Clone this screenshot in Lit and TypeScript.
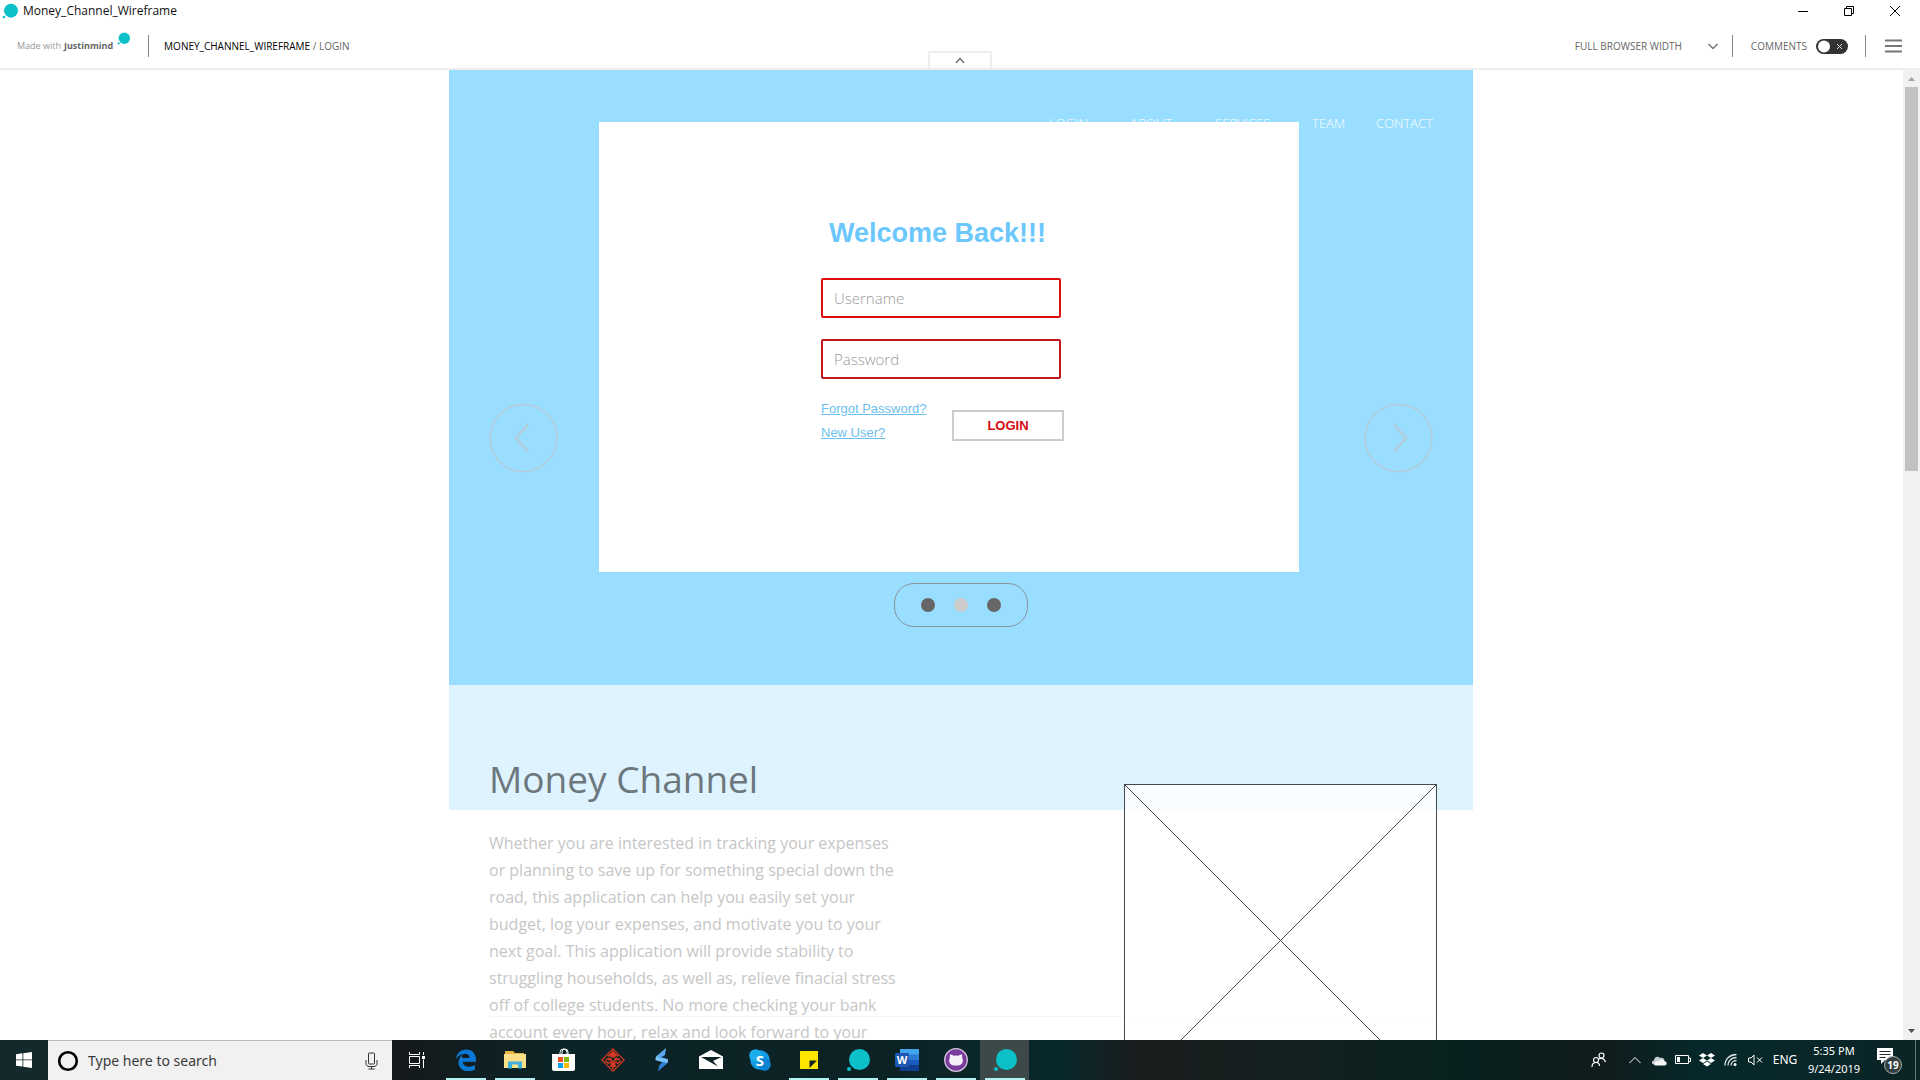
import { LitElement, html, css } from "lit";
import { customElement } from "lit/decorators.js";

const bubble = (size: number) => html`
  <svg width=${size} height=${size} viewBox="0 0 24 24" aria-hidden="true">
    <circle cx="13.5" cy="11.5" r="10.5" fill="#0bc0c6" />
    <circle cx="3" cy="21" r="2" fill="#0bc0c6" />
  </svg>
`;

@customElement("prototype-toolbar")
class PrototypeToolbar extends LitElement {
  static styles = css`
    :host {
      display: flex;
      flex-direction: column;
      position: relative;
      background: #fff;
      border-bottom: 2px solid #eee;
      font-family: "Open Sans", "Noto Sans", sans-serif;
    }
    button {
      border: 0;
      padding: 0;
      background: none;
      font: inherit;
      color: inherit;
      display: flex;
      align-items: center;
      justify-content: center;
    }
    .titlebar {
      display: flex;
      align-items: center;
      height: 22px;
      padding-left: 2px;
      gap: 5px;
      font-size: 12px;
      line-height: 22px;
      color: #111;
    }
    .titlebar svg {
      display: block;
    }
    .controls {
      display: flex;
      margin-left: auto;
      padding-right: 2px;
    }
    .controls button {
      width: 46px;
      height: 22px;
    }
    .toolbar {
      display: flex;
      align-items: center;
      box-sizing: border-box;
      height: 46px;
      padding: 2px 18px 0 17px;
      font-size: 10px;
      line-height: 16px;
      color: #666;
    }
    .brand {
      display: flex;
      align-items: center;
      color: #999;
      font-size: 9px;
    }
    .brand b {
      margin-left: 3px;
      font-weight: 700;
      color: #666;
    }
    .brand svg {
      margin: 0 0 16px 4px;
    }
    .divider {
      width: 1px;
      height: 22px;
      background: #888;
    }
    .crumbs {
      margin-left: 15px;
    }
    .crumbs a {
      color: #000;
      text-decoration: none;
    }
    .brand + .divider {
      margin-left: 18px;
    }
    .tools {
      display: flex;
      align-items: center;
      margin-left: auto;
    }
    .width {
      display: flex;
      align-items: center;
      margin-right: 14px;
    }
    select {
      appearance: none;
      border: 0;
      padding: 0;
      width: 133px;
      background: none;
      font: inherit;
      color: inherit;
    }
    .comments {
      display: flex;
      align-items: center;
      gap: 9px;
      margin: 0 17px 0 18px;
    }
    .switch {
      display: flex;
      position: relative;
    }
    .switch input {
      appearance: none;
      margin: 0;
      width: 32px;
      height: 15px;
      border-radius: 8px;
      background: #333;
    }
    .switch svg {
      position: absolute;
      inset: 0;
      pointer-events: none;
    }
    .menu {
      margin-left: 19px;
    }
    .collapse {
      position: absolute;
      left: 50%;
      bottom: 0;
      margin-left: -32px;
      box-sizing: border-box;
      width: 64px;
      height: 17px;
      border: 2px solid #eee;
      border-bottom: 0;
    }
  `;

  render() {
    return html`
      <div class="titlebar">
        ${bubble(16)}
        <span>Money_Channel_Wireframe</span>
        <div class="controls">
          <button aria-label="Minimize">
            <svg width="12" height="12"><path d="M1 6.500h10" stroke="#000" /></svg>
          </button>
          <button aria-label="Restore">
            <svg width="12" height="12" fill="none" stroke="#000">
              <path d="M1.500 3.500h7v7h-7zM3.500 3.500v-2h7v7h-2" />
            </svg>
          </button>
          <button aria-label="Close">
            <svg width="12" height="12"><path d="M1 1l10 10M11 1L1 11" stroke="#000" /></svg>
          </button>
        </div>
      </div>
      <div class="toolbar">
        <div class="brand">Made with <b>Justinmind</b>${bubble(13)}</div>
        <span class="divider"></span>
        <div class="crumbs"><a href="#">MONEY_CHANNEL_WIREFRAME</a> / LOGIN</div>
        <div class="tools">
          <div class="width">
            <select aria-label="Simulation width">
              <option>FULL BROWSER WIDTH</option>
            </select>
            <svg width="10" height="7" fill="none" stroke="#777" stroke-width="1.500">
              <path d="M.5 1l4.500 4.500L9.500 1" />
            </svg>
          </div>
          <span class="divider"></span>
          <label class="comments">
            COMMENTS
            <span class="switch">
              <input type="checkbox" role="switch" />
              <svg width="32" height="15">
                <circle cx="8" cy="7.500" r="6" fill="#fff" />
                <path d="M21 5l5 5M26 5l-5 5" stroke="#ddd" />
              </svg>
            </span>
          </label>
          <span class="divider"></span>
          <button class="menu" aria-label="Menu">
            <svg width="17" height="14" stroke="#777" stroke-width="2">
              <path d="M0 1.500h17M0 7h17M0 12.500h17" />
            </svg>
          </button>
        </div>
      </div>
      <button class="collapse" aria-label="Hide toolbar">
        <svg width="10" height="7" fill="none" stroke="#777" stroke-width="1.500">
          <path d="M1 6l4-4.500L9 6" />
        </svg>
      </button>
    `;
  }
}

@customElement("login-dialog")
class LoginDialog extends LitElement {
  static styles = css`
    :host {
      display: flex;
      justify-content: center;
      background: #fff;
      font-family: "Liberation Sans", Arial, sans-serif;
    }
    form {
      width: 256px;
      padding-top: 93px;
      padding-right: 13px;
      box-sizing: border-box;
      display: flex;
      flex-direction: column;
    }
    h1 {
      margin: 0 0 27px 8px;
      font-size: 27px;
      line-height: 36px;
      font-weight: 700;
      color: #6cc8fc;
      white-space: nowrap;
    }
    .fields {
      display: flex;
      flex-direction: column;
      gap: 21px;
      margin-bottom: 18px;
    }
    input {
      box-sizing: border-box;
      width: 240px;
      height: 40px;
      padding: 0 11px;
      border: 2px solid #dc1010;
      border-radius: 2px;
      background: #fff;
      font: 300 15px/24px "Open Sans", sans-serif;
      color: #555;
    }
    input[type="password"] {
      border-color: #c4161c;
    }
    input::placeholder {
      color: #999;
      opacity: 1;
    }
    .actions {
      display: flex;
      align-items: flex-start;
      justify-content: space-between;
    }
    .links {
      display: flex;
      flex-direction: column;
      font-size: 13px;
      line-height: 24px;
    }
    a {
      color: #6cc0f0;
    }
    button {
      box-sizing: border-box;
      width: 112px;
      height: 31px;
      margin-top: 13px;
      border: 2px solid #ccc;
      background: #fff;
      padding: 0;
      font: 700 13px/20px "Liberation Sans", Arial, sans-serif;
      color: #d6090f;
    }
  `;

  render() {
    return html`
      <form>
        <h1>Welcome Back!!!</h1>
        <div class="fields">
          <input type="text" placeholder="Username" aria-label="Username" />
          <input type="password" placeholder="Password" aria-label="Password" />
        </div>
        <div class="actions">
          <div class="links">
            <a href="#">Forgot Password?</a>
            <a href="#">New User?</a>
          </div>
          <button type="button">LOGIN</button>
        </div>
      </form>
    `;
  }
}

@customElement("landing-page")
class LandingPage extends LitElement {
  static styles = css`
    :host {
      display: block;
      position: relative;
      width: 1024px;
      max-width: 100%;
      font-family: "Open Sans", "Noto Sans", sans-serif;
    }
    .hero {
      display: flex;
      flex-direction: column;
      background: #99ddff;
      padding: 44px 40px 58px;
    }
    nav {
      display: grid;
      grid-template-columns: 81px 85px 97px 64px auto;
      justify-content: end;
      font-size: 13px;
      line-height: 18px;
      font-weight: 300;
    }
    nav a {
      color: #fff;
      text-decoration: none;
    }
    .carousel {
      display: flex;
      justify-content: space-between;
      margin-top: 271px;
    }
    .carousel button {
      border: 0;
      padding: 0;
      background: none;
      display: flex;
    }
    .pager {
      display: flex;
      align-items: center;
      align-self: center;
      gap: 19px;
      box-sizing: border-box;
      height: 44px;
      margin-top: 110px;
      padding: 0 26px;
      border: 1px solid #8a949a;
      border-radius: 20px;
    }
    .dot {
      width: 14px;
      height: 14px;
      padding: 0;
      border: 0;
      border-radius: 50%;
      background: #666;
    }
    .current {
      background: #ccc;
    }
    login-dialog {
      position: absolute;
      left: 150px;
      top: 52px;
      width: 700px;
      height: 450px;
    }
    .about {
      display: flex;
      justify-content: space-between;
      padding: 0 36px 0 40px;
      background: linear-gradient(#dff3ff 125px, transparent 125px);
    }
    .copy {
      width: 412px;
      padding-top: 68px;
    }
    h2 {
      margin: 0 0 25px;
      font-size: 37px;
      line-height: 52px;
      font-weight: 400;
      color: #6c777d;
      white-space: nowrap;
    }
    p {
      margin: 0;
      font-size: 16px;
      line-height: 27px;
      color: #c6c6c6;
    }
    .picture {
      position: relative;
      z-index: 1;
      margin-top: 99px;
      flex: none;
    }
    .rule {
      position: absolute;
      left: 40px;
      right: 36px;
      top: 946px;
      margin: 0;
      border: 0;
      border-top: 1px solid #f6f6f6;
    }
  `;

  render() {
    return html`
      <section class="hero">
        <nav>
          ${["LOGIN", "ABOUT", "SERVICES", "TEAM", "CONTACT"].map(
            (name) => html`<a href="#">${name}</a>`
          )}
        </nav>
        <div class="carousel">
          <button aria-label="Previous">
            <svg width="70" height="70" fill="none" stroke="#b4ccd9">
              <circle cx="34.500" cy="35" r="33.500" stroke-width="1.500" />
              <path d="M39 21.500L27 35l12 13.500" stroke-width="2.500" />
            </svg>
          </button>
          <button aria-label="Next">
            <svg width="70" height="70" fill="none" stroke="#b4ccd9">
              <circle cx="35.500" cy="35" r="33.500" stroke-width="1.500" />
              <path d="M31 21.500L43 35 31 48.500" stroke-width="2.500" />
            </svg>
          </button>
        </div>
        <div class="pager">
          <button class="dot" aria-label="Slide 1"></button>
          <button class="dot current" aria-label="Slide 2"></button>
          <button class="dot" aria-label="Slide 3"></button>
        </div>
      </section>
      <section class="about">
        <div class="copy">
          <h2>Money Channel</h2>
          <p>
            Whether you are interested in tracking your expenses or planning to save up for
            something special down the road, this application can help you easily set your budget,
            log your expenses, and motivate you to your next goal. This application will provide
            stability to struggling households, as well as, relieve finacial stress off of college
            students. No more checking your bank account every hour, relax and look forward to your
          </p>
        </div>
        <svg class="picture" width="313" height="313" stroke="#434a50">
          <rect x=".5" y=".5" width="312" height="312" fill="#fff" fill-opacity=".8" />
          <path d="M.5.5l312 312M312.500.5L.5 312.500" />
        </svg>
      </section>
      <hr class="rule" />
      <login-dialog></login-dialog>
    `;
  }
}

interface Task {
  name: string;
  open?: boolean;
  active?: boolean;
  icon: unknown;
}

const tasks: Task[] = [
  {
    name: "Task View",
    icon: html`<svg width="18" height="18" fill="none" stroke="#fff">
      <path d="M1.500 5.500h10v7h-10zM1.500 1v2.500h10V1M1.500 17v-2.500h10V17M15.500 1v3M15.500 8.500V17" />
      <path d="M14 5h3v3h-3z" fill="#fff" stroke="none" />
    </svg>`,
  },
  {
    name: "Edge",
    open: true,
    icon: html`<svg width="22" height="22" viewBox="0 0 22 22">
      <path
        d="M1 10C1.500 4.500 5.800.5 11.300.5 17.500.5 21 5 21 10.500v2.300H7.800c.2 3.500 3 5 6.200 5 2.300 0 4.300-.7 6-1.700v4.300c-2 1.100-4.400 1.600-7 1.600-6 0-9.500-3.700-9.500-8.600 0-3.600 2-6.400 5-7.900C7 6.600 7 8 7 9h7.500c0-2.700-1.500-4.300-4.500-4.300C6 4.700 3 7 1 10z"
        fill="#0a78d4"
      />
    </svg>`,
  },
  {
    name: "File Explorer",
    open: true,
    icon: html`<svg width="22" height="20" viewBox="0 0 22 20">
      <path d="M1 1h8l2 2h9v3H1z" fill="#e8b93e" />
      <path d="M0 4h22v14H0z" fill="#fbe08a" />
      <path d="M4 18.500v-7h14v7h-4v-4H8v4z" fill="#3fb1dc" />
    </svg>`,
  },
  {
    name: "Store",
    icon: html`<svg width="24" height="24" viewBox="0 0 24 24">
      <path d="M8 7V4.500a3.500 3.500 0 017 0V7M10 7V4a3 3 0 016 0v3" fill="none" stroke="#fff" />
      <path d="M0 6h23v15a2 2 0 01-2 2H2a2 2 0 01-2-2z" fill="#fff" />
      <path d="M6 9h5v5H6z" fill="#f25022" />
      <path d="M12 9h5v5h-5z" fill="#7fba00" />
      <path d="M6 15h5v5H6z" fill="#00a4ef" />
      <path d="M12 15h5v5h-5z" fill="#ffb900" />
    </svg>`,
  },
  {
    name: "Game",
    icon: html`<svg width="24" height="24" viewBox="0 0 24 24" fill="none" stroke="#d43a22">
      <path d="M12 .8L23.200 12 12 23.200.8 12z" stroke-width="1.200" />
      <path
        d="M12 2.500v3M7 8l4-2.500h2L17 8M5 11l5 1 2 2 2-2 5-1M7.500 10l3 1M16.500 10l-3 1M8 14l2.500 1v4M16 14l-2.500 1v4M12 15v6M4 12.500l4 3.500M20 12.500L16 16M9 18h6"
        stroke-width="1.600"
      />
      <path d="M9 6l3-2.500L15 6l-1 3h-4z" fill="#d43a22" />
    </svg>`,
  },
  {
    name: "Streamlabs",
    icon: html`<svg width="16" height="24" viewBox="0 0 16 24">
      <path d="M12 0L2 8.500 1.500 12l8.500 3 1-4-4-1.500L11 7z" fill="#5aa9ee" />
      <path d="M4 23.500l9.500-8.500.5-4-8-2.500L5 12l4 2-3.500 3z" fill="#2f7fd8" />
      <path d="M2 8.500l12 3-.5 3.500L1.500 12z" fill="#7cc4f5" />
    </svg>`,
  },
  {
    name: "Mail",
    icon: html`<svg width="24" height="20" viewBox="0 0 24 20">
      <path d="M0 6.500L12 0l12 6.500V19H0z" fill="#fff" />
      <path d="M2 7h20.500L14 11l5 5.500L11 12z" fill="#0c2124" />
    </svg>`,
  },
  {
    name: "Skype",
    icon: html`<svg width="22" height="22" viewBox="0 0 22 22">
      <circle cx="11" cy="11" r="9.800" fill="#0f9be4" />
      <circle cx="6.500" cy="6.500" r="6.300" fill="#1cace9" />
      <circle cx="15.500" cy="15.500" r="6.300" fill="#0b82d2" />
      <text x="11" y="16.500" text-anchor="middle" class="glyph">S</text>
    </svg>`,
  },
  {
    name: "Sticky Notes",
    open: true,
    icon: html`<svg width="18" height="18">
      <path d="M0 0h18v18H0z" fill="#ffe600" />
      <path d="M9.500 9.500H17L9.500 17z" fill="#16211f" />
    </svg>`,
  },
  { name: "Justinmind", open: true, icon: bubble(24) },
  {
    name: "Word",
    open: true,
    icon: html`<svg width="24" height="22" viewBox="0 0 24 22">
      <path d="M5 0h19v6H5z" fill="#41a5ee" />
      <path d="M5 5.500h19V11H5z" fill="#2b7cd3" />
      <path d="M5 11h19v5.500H5z" fill="#185abd" />
      <path d="M5 16.500h19V22H5z" fill="#103f91" />
      <rect y="4" width="14" height="14" rx="1" fill="#1c57b5" />
      <text x="7" y="15" text-anchor="middle" class="letter">W</text>
    </svg>`,
  },
  {
    name: "GitHub Desktop",
    open: true,
    icon: html`<svg width="24" height="24" viewBox="0 0 24 24">
      <circle cx="12" cy="12" r="11.300" fill="#7a3c9c" stroke="#d9c8e2" stroke-width="1.300" />
      <path
        d="M6 6.500c1.500 0 2.700.6 3.700 1.300a12 12 0 014.600 0c1-.7 2.200-1.300 3.700-1.300.4 1.200.4 2.300 0 3.300 1.200 1.600 1.200 4 0 5.700-1.300 1.700-3.500 2-6 2s-4.700-.3-6-2c-1.200-1.700-1.200-4.100 0-5.700-.4-1-.4-2.100 0-3.300z"
        fill="#f4eef7"
      />
    </svg>`,
  },
  { name: "Justinmind Viewer", open: true, active: true, icon: bubble(24) },
];

@customElement("task-bar")
class TaskBar extends LitElement {
  static styles = css`
    :host {
      display: flex;
      height: 40px;
      flex: none;
      color: #fff;
      font-family: "Noto Sans", sans-serif;
      background: linear-gradient(
        90deg,
        #14292c 0,
        #14292c 48px,
        #15191b 392px,
        #0b2427 560px,
        #0d2225 860px,
        #08282b 1060px,
        #1a1c1d 1140px,
        #14201f 1270px,
        #07211f 1460px,
        #101b1c 1600px,
        #06282a 1700px,
        #0b2426 100%
      );
    }
    button {
      border: 0;
      padding: 0;
      background: none;
      font: inherit;
      color: inherit;
      display: flex;
      align-items: center;
      justify-content: center;
    }
    .start {
      width: 48px;
    }
    .search {
      display: flex;
      align-items: center;
      box-sizing: border-box;
      width: 344px;
      padding: 0 14px 0 9px;
      background: #f1f1f1;
      border-top: 1px solid #bbb;
    }
    .search input {
      flex: 1;
      min-width: 0;
      border: 0;
      padding: 0 0 0 9px;
      background: none;
      font: 14px/20px "Noto Sans", sans-serif;
      color: #333;
    }
    .search input::placeholder {
      color: #3a3a3a;
      opacity: 1;
    }
    .task {
      width: 49px;
      border-top: 2px solid transparent;
      border-bottom: 2px solid transparent;
      position: relative;
    }
    .open::after {
      content: "";
      position: absolute;
      left: 5px;
      right: 4px;
      bottom: -2px;
      height: 2px;
      background: #b4f1f3;
    }
    .active {
      background-color: #3d4849;
      border-color: #3d4849;
    }
    .glyph {
      font: 700 15px "Noto Sans", sans-serif;
      fill: #fff;
    }
    .letter {
      font: 700 11px "Noto Sans", sans-serif;
      fill: #fff;
    }
    .tray {
      display: flex;
      align-items: center;
      margin-left: auto;
      font-size: 12px;
      line-height: 18px;
    }
    .tray button {
      width: 24px;
      height: 40px;
    }
    .tray .people {
      width: 48px;
    }
    .tray .language {
      width: 36px;
    }
    .tray .clock {
      width: 62px;
      font-size: 11px;
      text-align: center;
    }
    .tray .notices {
      width: 50px;
    }
    .tray .desktop {
      width: 5px;
      border-left: 1px solid #62787a;
    }
    .count {
      font: 700 10px "Noto Sans", sans-serif;
      fill: #fff;
    }
  `;

  render() {
    return html`
      <button class="start" aria-label="Start">
        <svg width="16" height="16" fill="#fff">
          <path d="M0 2.200L6.500 1.300v6.200H0zM7.300 1.200L16 0v7.500H7.300zM0 8.300h6.500v6.300L0 13.700zM7.300 8.300H16V16l-8.700-1.200z" />
        </svg>
      </button>
      <label class="search">
        <svg width="22" height="22" fill="none">
          <circle cx="11" cy="11" r="8.800" stroke="#000" stroke-width="2.600" />
        </svg>
        <input type="text" placeholder="Type here to search" aria-label="Search" />
        <svg width="13" height="18" fill="none" stroke="#333">
          <rect x="3.500" y="1" width="6" height="11" rx="1" />
          <path d="M1 8v3.500c0 2 1.500 3 3 3h5c1.500 0 3-1 3-3V8M6.500 14.500v2.500M3.500 17h6" />
        </svg>
      </label>
      ${tasks.map(
        (task) => html`
          <button
            class="task ${task.open ? "open" : ""} ${task.active ? "active" : ""}"
            aria-label=${task.name}
          >
            ${task.icon}
          </button>
        `
      )}
      <div class="tray">
        <button class="people" aria-label="People">
          <svg width="16" height="16" fill="none" stroke="#fff" stroke-width="1.200">
            <circle cx="10.500" cy="3.500" r="2.500" />
            <circle cx="5" cy="8" r="2.500" />
            <path d="M1 15c0-3 1.500-4.500 4-4.500S8.500 12 8.500 14M8 7c1-1 5-1.500 6.500 3" />
          </svg>
        </button>
        <button aria-label="Show hidden icons">
          <svg width="12" height="8" fill="none" stroke="#fff"><path d="M.5 7L6 1.500 11.500 7" /></svg>
        </button>
        <button aria-label="OneDrive">
          <svg width="16" height="11">
            <path d="M3 9.500C0 9 .5 5.500 3 5.500 3 2 7 .5 9 3c3-1 4.500 1 4.500 3 3 .5 2.500 4 0 4H4z" fill="#c6cdce" />
            <path d="M4 10.500c-2-3 1-5.500 3.500-4C9 4 13 4 13 6.500c3 0 3.500 4 .5 4z" fill="#f4f6f6" />
          </svg>
        </button>
        <button aria-label="Battery">
          <svg width="16" height="10" fill="none" stroke="#fff">
            <path d="M.5.5h13v8H.5zM14 3h1.500v3.500H14" />
            <path d="M2 2h3v5H2z" fill="#fff" stroke="none" />
          </svg>
        </button>
        <button aria-label="Dropbox">
          <svg width="16" height="14" fill="#fff">
            <path d="M4 0l4 2.500L4 5 0 2.500zM12 0l4 2.500L12 5 8 2.500zM4 5l4 2.500L4 10 0 7.500zM12 5l4 2.500-4 2.500-4-2.500zM8 8.500l4 2.500-4 2.500L4 11z" />
          </svg>
        </button>
        <button aria-label="Network">
          <svg width="14" height="14" fill="none" stroke="#dde3e3" stroke-width="1.300">
            <path d="M1 12.500C1 6 6 1.500 12.500 1.500M4 12.500c0-4.500 3.500-8 8.500-8M7 12.500c0-3 2.500-5 5.500-5" />
            <circle cx="11" cy="11.500" r="1.500" fill="#fff" stroke="none" />
          </svg>
        </button>
        <button aria-label="Volume muted">
          <svg width="15" height="12" fill="none" stroke="#fff">
            <path d="M.5 4h2.500l3-3v10l-3-3H.5zM9 3.500l5 5M14 3.500l-5 5" />
          </svg>
        </button>
        <button class="language">ENG</button>
        <button class="clock">5:35 PM<br />9/24/2019</button>
        <button class="notices" aria-label="Notifications">
          <svg width="28" height="30">
            <path d="M1 3h16v12H9l-4 4v-4H1z" fill="#fff" />
            <path d="M3.500 6.500h11M3.500 9.500h11M3.500 12.500h6" stroke="#1c2b2c" />
            <circle cx="17" cy="20" r="8.500" fill="#333d3e" stroke="#a9b0b0" />
            <text x="17" y="24" text-anchor="middle" class="count">19</text>
          </svg>
        </button>
        <button class="desktop" aria-label="Show desktop"></button>
      </div>
    `;
  }
}

@customElement("app-root")
class AppRoot extends LitElement {
  static styles = css`
    :host {
      display: flex;
      flex-direction: column;
      height: 100vh;
      overflow: hidden;
      background: #fff;
    }
    .viewport {
      display: flex;
      flex: 1;
      min-height: 0;
    }
    .canvas {
      display: flex;
      flex: 1;
      justify-content: center;
      align-items: flex-start;
      min-width: 0;
      padding-left: 19px;
      overflow: hidden;
    }
    .scrollbar {
      display: flex;
      flex-direction: column;
      align-items: center;
      width: 17px;
      background: #f1f1f1;
    }
    .arrow {
      flex: none;
      width: 17px;
      height: 17px;
    }
    .track {
      flex: 1;
      width: 13px;
    }
    .thumb {
      height: 41%;
      background: #c1c1c1;
    }
  `;

  render() {
    return html`
      <prototype-toolbar></prototype-toolbar>
      <div class="viewport">
        <main class="canvas"><landing-page></landing-page></main>
        <div class="scrollbar">
          <svg class="arrow"><path d="M5 11l3.500-4 3.500 4z" fill="#a3a3a3" /></svg>
          <div class="track"><div class="thumb"></div></div>
          <svg class="arrow"><path d="M5 6l3.500 4L12 6z" fill="#505050" /></svg>
        </div>
      </div>
      <task-bar></task-bar>
    `;
  }
}
